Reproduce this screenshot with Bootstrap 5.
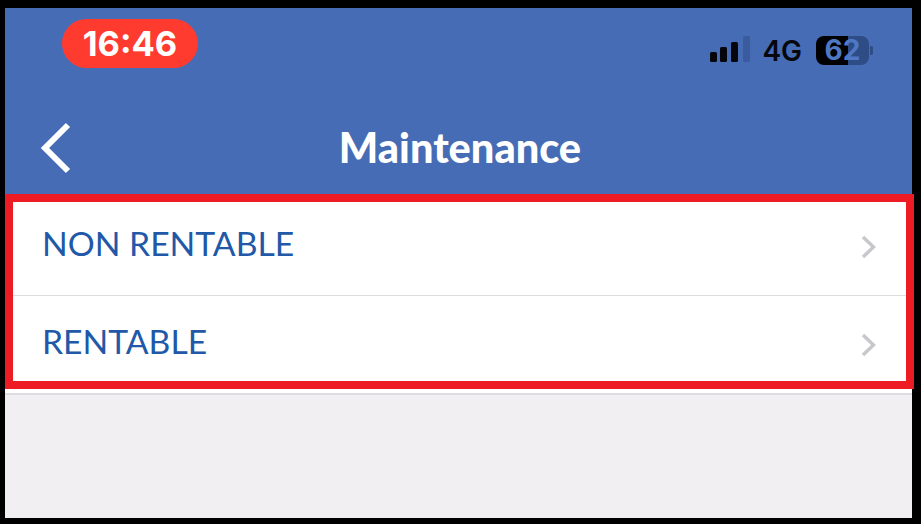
<!DOCTYPE html>
<html lang="en">
<head>
    <meta charset="UTF-8">
    <title>Maintenance</title>
    <link href="https://cdn.jsdelivr.net/npm/bootstrap@5.3.0/dist/css/bootstrap.min.css" rel="stylesheet">
    <style>
        html, body { height: 100%; }
        body { background: #000; padding: 8px 0 6px 5px; overflow: hidden; }
        .phone { width: 907px; height: 510px; background: #f1eff2; font-family: Lato, "Liberation Sans", sans-serif; }
        .top-area { height: 186px; background: #466cb6; color: #fff; }
        .status-row { height: 94px; padding: 11px 0 0 57px; }
        .time-pill { width: 136px; height: 49px; background: #ff3b30; font: 700 34.5px/49px Inter, sans-serif; }
        .status-right { padding: 17px 39px 0 0; color: #05070d; }
        .signal-icon { margin-bottom: 3px; }
        .net-label { font: 600 28px/1 Inter, sans-serif; margin: 0 14px 0 11px; }
        .batt { width: 53px; height: 29px; border-radius: 8px; background: linear-gradient(90deg, #000 60%, #2e4c85 60%); color: #4f78c4; font: 700 28px/29px Inter, sans-serif; }
        .batt-nub { width: 3px; height: 9px; background: #2e4c85; border-radius: 0 2px 2px 0; margin-left: 1px; }
        .title-row { display: grid; grid-template-columns: 1fr auto 1fr; height: 92px; }
        .back-link { padding-left: 35px; line-height: 0; }
        .page-title { font-size: 41.5px; font-weight: 900; margin: 0 0 0 3px; line-height: 1; }
        .list-wrap { background: #fff; border-bottom: 2px solid #dfdde1; }
        .list-wrap .list-group-item { background: #fff; color: #2159a8; font-size: 33.7px; line-height: 1; padding: 0 36px 0 37px; border-color: #dcdbde; }
        .row-label { margin-bottom: 6px; }
        .item-one { height: 102px; padding-top: 4px !important; }
        .item-two { height: 97px; }
        .red-frame { top: 186px; left: 0; width: 909px; height: 195px; border: 8px solid #ed1c24; pointer-events: none; }
    </style>
</head>
<body>

<div class="phone position-relative">
    <!-- Blue header -->
    <div class="top-area">
        <div class="status-row d-flex justify-content-between align-items-start">
            <div class="time-pill rounded-pill text-center">16:46</div>
            <div class="status-right d-flex align-items-center">
                <svg class="signal-icon" width="41" height="26" viewBox="0 0 41 26">
                    <rect x="0" y="16" width="7" height="10" rx="1.5" fill="#05070d"/>
                    <rect x="10" y="11" width="7" height="15" rx="1.5" fill="#05070d"/>
                    <rect x="21" y="6" width="7" height="20" rx="1.5" fill="#05070d"/>
                    <rect x="33" y="0" width="7" height="26" rx="1.5" fill="#3a5c9e"/>
                </svg>
                <span class="net-label">4G</span>
                <div class="batt text-center">62</div>
                <div class="batt-nub"></div>
            </div>
        </div>
        <div class="title-row align-items-center">
            <div class="back-link">
                <svg width="34" height="52" viewBox="0 0 34 52">
                    <path d="M28 3 L5 26 L28 49" fill="none" stroke="#fff" stroke-width="6"/>
                </svg>
            </div>
            <h1 class="page-title">Maintenance</h1>
            <div></div>
        </div>
    </div>

    <!-- Menu rows -->
    <div class="list-group list-group-flush list-wrap">
        <div class="list-group-item item-one d-flex justify-content-between align-items-center">
            <span class="row-label">NON RENTABLE</span>
            <svg width="15" height="24" viewBox="0 0 15 24"><path d="M2 2 L12.5 12 L2 22" fill="none" stroke="#c7c7cc" stroke-width="3.5"/></svg>
        </div>
        <div class="list-group-item item-two d-flex justify-content-between align-items-center">
            <span class="row-label">RENTABLE</span>
            <svg width="15" height="24" viewBox="0 0 15 24"><path d="M2 2 L12.5 12 L2 22" fill="none" stroke="#c7c7cc" stroke-width="3.5"/></svg>
        </div>
    </div>

    <!-- Highlight drawn over the rows -->
    <div class="red-frame position-absolute"></div>
</div>

<script src="https://cdn.jsdelivr.net/npm/bootstrap@5.3.0/dist/js/bootstrap.bundle.min.js"></script>
</body>
</html>
